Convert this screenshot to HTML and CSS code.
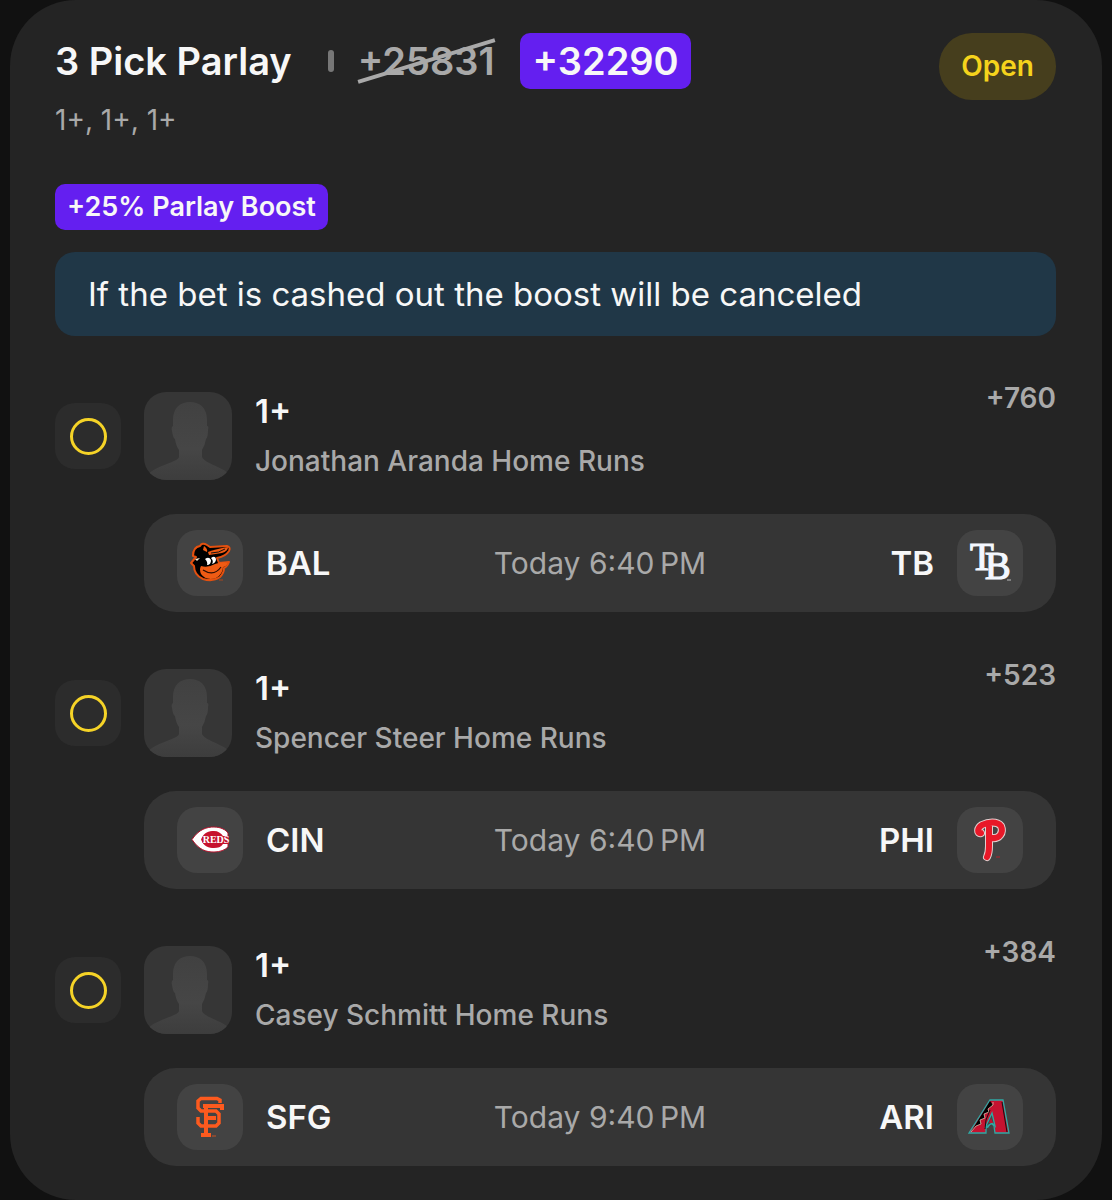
FILE: index.html
```html
<!DOCTYPE html>
<html lang="en">
<head>
    <meta charset="UTF-8">
    <meta name="viewport" content="width=device-width, initial-scale=1.0">
    <title>3 Pick Parlay</title>
    <link rel="stylesheet" href="styles.css">
</head>
<body>
    <svg class="sprite" aria-hidden="true">
        <linearGradient id="avatarFade" x1="0" y1="0" x2="0" y2="1">
            <stop offset="0" stop-color="#414141"/>
            <stop offset="0.6" stop-color="#464646"/>
            <stop offset="1" stop-color="#3d3d3d"/>
        </linearGradient>
        <symbol id="avatar" viewBox="0 0 88 88">
            <path fill="url(#avatarFade)" d="M46 10C36 10 29 16 29 28L29 34Q27 35 28 39Q29 46 31 47Q32 54 35 58L35 65C34 70 14 73 4 82L0 88H88L84 81C76 74 60 71 58 65L58 58Q61 53 62 47Q64 45 64 38Q65 34 63 34L63 28C63 16 56 10 46 10Z"/>
        </symbol>
    </svg>

    <main class="bet-card">
        <header class="bet-header">
            <div>
                <div class="title-row">
                    <h1>3 Pick Parlay</h1>
                    <span class="separator"></span>
                    <s class="old-odds">+25831</s>
                    <span class="new-odds">+32290</span>
                </div>
                <p class="picks">1+, 1+, 1+</p>
            </div>
            <span class="status-badge">Open</span>
        </header>

        <span class="boost">+25% Parlay Boost</span>
        <p class="notice">If the bet is cashed out the boost will be canceled</p>

        <div class="legs">
            <section class="leg">
                <div class="leg-info">
                    <span class="leg-status"></span>
                    <svg class="avatar"><use href="#avatar"/></svg>
                    <div class="pick">
                        <h2>1+</h2>
                        <p>Jonathan Aranda Home Runs</p>
                    </div>
                    <span class="leg-odds">+760</span>
                </div>
                <div class="game">
                    <div class="team">
                        <span class="team-logo">
                            <svg viewBox="0 0 80 80" role="img" aria-label="Baltimore Orioles">
                                <path fill="#000" stroke="#e4500f" stroke-width="2" stroke-linejoin="round" d="M21 40L26 34L23 33Q23 24 30 23Q32 19 37 22L40 24L57 23Q61 24 59 28Q56 33 47 35L49 40L59 39Q57 44 54 45Q54 50 50 54Q43 59 33 56Q24 52 24 43Z"/>
                                <path fill="#ef5b14" d="M38 29Q46 26 58 24Q58 28 52 30L39 32Z"/>
                                <path fill="none" stroke="#111" d="M41 30Q49 30 55 26"/>
                                <path fill="#ef5b14" d="M31 43Q38 45 45 41Q53 38 58 40Q56 44 53 44Q53 51 46 55Q36 58 31 51Q29 46 31 43Z"/>
                                <path fill="#ef5b14" d="M34 23Q38 26 37 29L33 27Z"/>
                                <path fill="none" stroke="#2a0d04" stroke-width="1.2" d="M33 47Q44 54 51 44"/>
                                <path fill="#fff" d="M35 36Q39 33 41 37Q41 42 37 42Q38 39 35 36ZM41 35Q45 32 46 36Q46 40 42 41Q44 38 41 35Z"/>
                                <path fill="#f4e6cf" d="M25 36L30 35L27 38Z"/>
                                <path stroke="#a7461f" d="M49 57H53"/>
                            </svg>
                        </span>
                        <b>BAL</b>
                    </div>
                    <time>Today 6:40&#8239;PM</time>
                    <div class="team away">
                        <b>TB</b>
                        <span class="team-logo">
                            <svg viewBox="0 0 80 80" role="img" aria-label="Tampa Bay Rays">
                                <text class="rays" x="20" y="47">T<tspan dx="-9" dy="9">B</tspan></text>
                                <path stroke="#bbb" d="M57 57H61"/>
                            </svg>
                        </span>
                    </div>
                </div>
            </section>

            <section class="leg">
                <div class="leg-info">
                    <span class="leg-status"></span>
                    <svg class="avatar"><use href="#avatar"/></svg>
                    <div class="pick">
                        <h2>1+</h2>
                        <p>Spencer Steer Home Runs</p>
                    </div>
                    <span class="leg-odds">+523</span>
                </div>
                <div class="game">
                    <div class="team">
                        <span class="team-logo">
                            <svg viewBox="0 0 80 80" role="img" aria-label="Cincinnati Reds">
                                <path fill="#fff" stroke="#b3122b" d="M22 39.5C29 29 37 27 44 27C51 27 56 30 58 33V37H33V43H58V47C55 50 50 52 44 52C36 52 29 50 22 39.5Z"/>
                                <path fill="#c6122d" d="M31 39.5C34 32 39 31 44 31C48 31 51 33 53 36H59V44H53C51 47 48 48 44 48C39 48 34 47 31 39.5Z"/>
                                <text class="reds" x="46" y="43">REDS</text>
                            </svg>
                        </span>
                        <b>CIN</b>
                    </div>
                    <time>Today 6:40&#8239;PM</time>
                    <div class="team away">
                        <b>PHI</b>
                        <span class="team-logo">
                            <svg viewBox="0 0 80 80" role="img" aria-label="Philadelphia Phillies">
                                <g fill="none" stroke-linecap="round" stroke-linejoin="round">
                                    <path stroke="#e3cfcf" stroke-width="8" d="M31 33C27 34 27 28 32 25C38 22 47 21 51 26C54 33 49 39 42 38M39 26V46Q39 53 37 57"/>
                                    <path stroke="#e81828" stroke-width="6" d="M31 33C27 34 27 28 32 25C38 22 47 21 51 26C54 33 49 39 42 38M39 26V46Q39 53 37 57"/>
                                </g>
                                <path stroke="#b3202c" d="M46 57H50"/>
                            </svg>
                        </span>
                    </div>
                </div>
            </section>

            <section class="leg">
                <div class="leg-info">
                    <span class="leg-status"></span>
                    <svg class="avatar"><use href="#avatar"/></svg>
                    <div class="pick">
                        <h2>1+</h2>
                        <p>Casey Schmitt Home Runs</p>
                    </div>
                    <span class="leg-odds">+384</span>
                </div>
                <div class="game">
                    <div class="team">
                        <span class="team-logo">
                            <svg viewBox="0 0 80 80" role="img" aria-label="San Francisco Giants">
                                <g fill="none" stroke="#fd5a1e" stroke-width="3.5">
                                    <path d="M50 26V23L47 21.5H31L28 24V31L31 34H46L49 37V46L46 49H31L28 46V40"/>
                                    <path stroke-width="4" d="M52 33V29H36V58M36 41H46M31 58H41M33 29H37"/>
                                </g>
                                <path stroke="#c75427" d="M42 59H46"/>
                            </svg>
                        </span>
                        <b>SFG</b>
                    </div>
                    <time>Today 9:40&#8239;PM</time>
                    <div class="team away">
                        <b>ARI</b>
                        <span class="team-logo">
                            <svg viewBox="0 0 80 80" role="img" aria-label="Arizona Diamondbacks">
                                <path fill="#c51230" stroke="#2fa9a5" stroke-width="1.3" d="M40 23H53L59 56H45L44 49Q41 44 38 50L36 51V56H19Z"/>
                                <path fill="#000" d="M40 24L43 28L38 32L39 35L34 37L35 41L30 43L31 47L26 49L21 55Z"/>
                                <path fill="none" stroke="#d8c3ae" stroke-width="0.8" d="M43 25V28L38 32L39 35L34 37L35 41L30 43L31 47L26 49L21 55"/>
                                <path fill="#444" stroke="#2fa9a5" stroke-width="1.3" d="M42 36L45 49L42 46L39 48L35 51Z"/>
                                <path fill="#c51230" d="M41 41L43 46H39Z"/>
                                <path fill="none" stroke="#111" d="M52 25L57 55M40 33L36 43L35 52"/>
                            </svg>
                        </span>
                    </div>
                </div>
            </section>
        </div>
    </main>
</body>
</html>
```

FILE: styles.css
```css
*, *::before {
    box-sizing: border-box;
}
body {
    margin: 0;
    background-color: #111;
    color: #f7f7f7;
    font-family: Inter, "Liberation Sans", sans-serif;
    font-size: 28px;
}
h1, h2, p {
    margin: 0;
}
.sprite {
    position: absolute;
    width: 0;
    height: 0;
}
.bet-card {
    margin: 0 10px;
    padding: 33px 46px 34px 45px;
    background-color: #242424;
    border-radius: 66px;
}
.bet-header {
    display: flex;
    justify-content: space-between;
    align-items: flex-start;
}
.title-row {
    display: flex;
    align-items: center;
    font-size: 38px;
    font-weight: 600;
    line-height: 56px;
}
h1 {
    font-size: inherit;
    font-weight: inherit;
}
.separator {
    width: 6px;
    height: 22px;
    margin: 0 24px 0 36px;
    border-radius: 3px;
    background-color: #777;
}
.old-odds {
    position: relative;
    color: #a9a9a9;
    text-decoration: none;
}
/* slanted strike line */
.old-odds::after {
    content: "";
    position: absolute;
    top: 26px;
    left: -3px;
    right: -3px;
    height: 4px;
    background-color: #a9a9a9;
    transform: rotate(-17deg);
}
.new-odds {
    margin-left: 26px;
    padding: 0 12px;
    border-radius: 10px;
    background-color: #641ff0;
}
.picks {
    margin-top: 14px;
    color: #a9a9a9;
    line-height: 34px;
}
.status-badge {
    padding: 0 22px;
    border-radius: 33px;
    background-color: #463e1d;
    color: #f5d31c;
    font-weight: 600;
    line-height: 67px;
}
.boost {
    display: block;
    width: fit-content;
    margin-top: 47px;
    padding: 0 12px;
    border-radius: 10px;
    background-color: #641ff0;
    font-size: 27px;
    font-weight: 600;
    line-height: 46px;
}
.notice {
    margin-top: 22px;
    padding: 0 33px;
    border-radius: 20px;
    background-color: #203747;
    font-size: 33px;
    line-height: 84px;
}
.legs {
    display: flex;
    flex-direction: column;
    gap: 46px;
    margin-top: 45px;
}
.leg-info {
    display: flex;
    align-items: center;
    height: 110px;
}
.leg-status {
    display: flex;
    justify-content: center;
    align-items: center;
    width: 66px;
    height: 66px;
    border-radius: 20px;
    background-color: #2c2c2c;
}
.leg-status::before {
    content: "";
    width: 37px;
    height: 37px;
    border: 3px solid #f5d327;
    border-radius: 50%;
}
.avatar {
    width: 88px;
    height: 88px;
    margin: 0 23px;
    border-radius: 22px;
    background-color: #363636;
}
.pick {
    flex: 1;
    line-height: 50px;
}
.pick h2 {
    font-size: 33px;
    font-weight: 600;
}
.pick p {
    color: #a9a9a9;
    font-weight: 500;
}
.leg-odds {
    align-self: flex-start;
    color: #a9a9a9;
    font-weight: 600;
    line-height: 34px;
}
.game {
    display: grid;
    grid-template-columns: 1fr auto 1fr;
    align-items: center;
    margin: 23px 0 0 89px;
    padding: 16px 33px;
    border-radius: 32px;
    background-color: #353535;
}
.team {
    display: flex;
    align-items: center;
    gap: 23px;
    font-size: 33px;
}
.team b {
    font-weight: 600;
}
.away {
    justify-content: flex-end;
}
.team-logo {
    width: 66px;
    height: 66px;
    border-radius: 20px;
    background-color: #434343;
}
.team-logo svg {
    display: block;
    width: 80px;
    height: 80px;
    margin: -7px;
}
.game time {
    color: #a9a9a9;
    font-size: 30px;
}
.rays {
    fill: #f4f8ff;
    stroke: #f4f8ff;
    stroke-width: 1.2px;
    font-family: "Liberation Serif", serif;
    font-size: 39px;
}
.reds {
    fill: #fff;
    font-family: "Liberation Serif", serif;
    font-size: 10px;
    font-weight: 700;
    text-anchor: middle;
}
```
